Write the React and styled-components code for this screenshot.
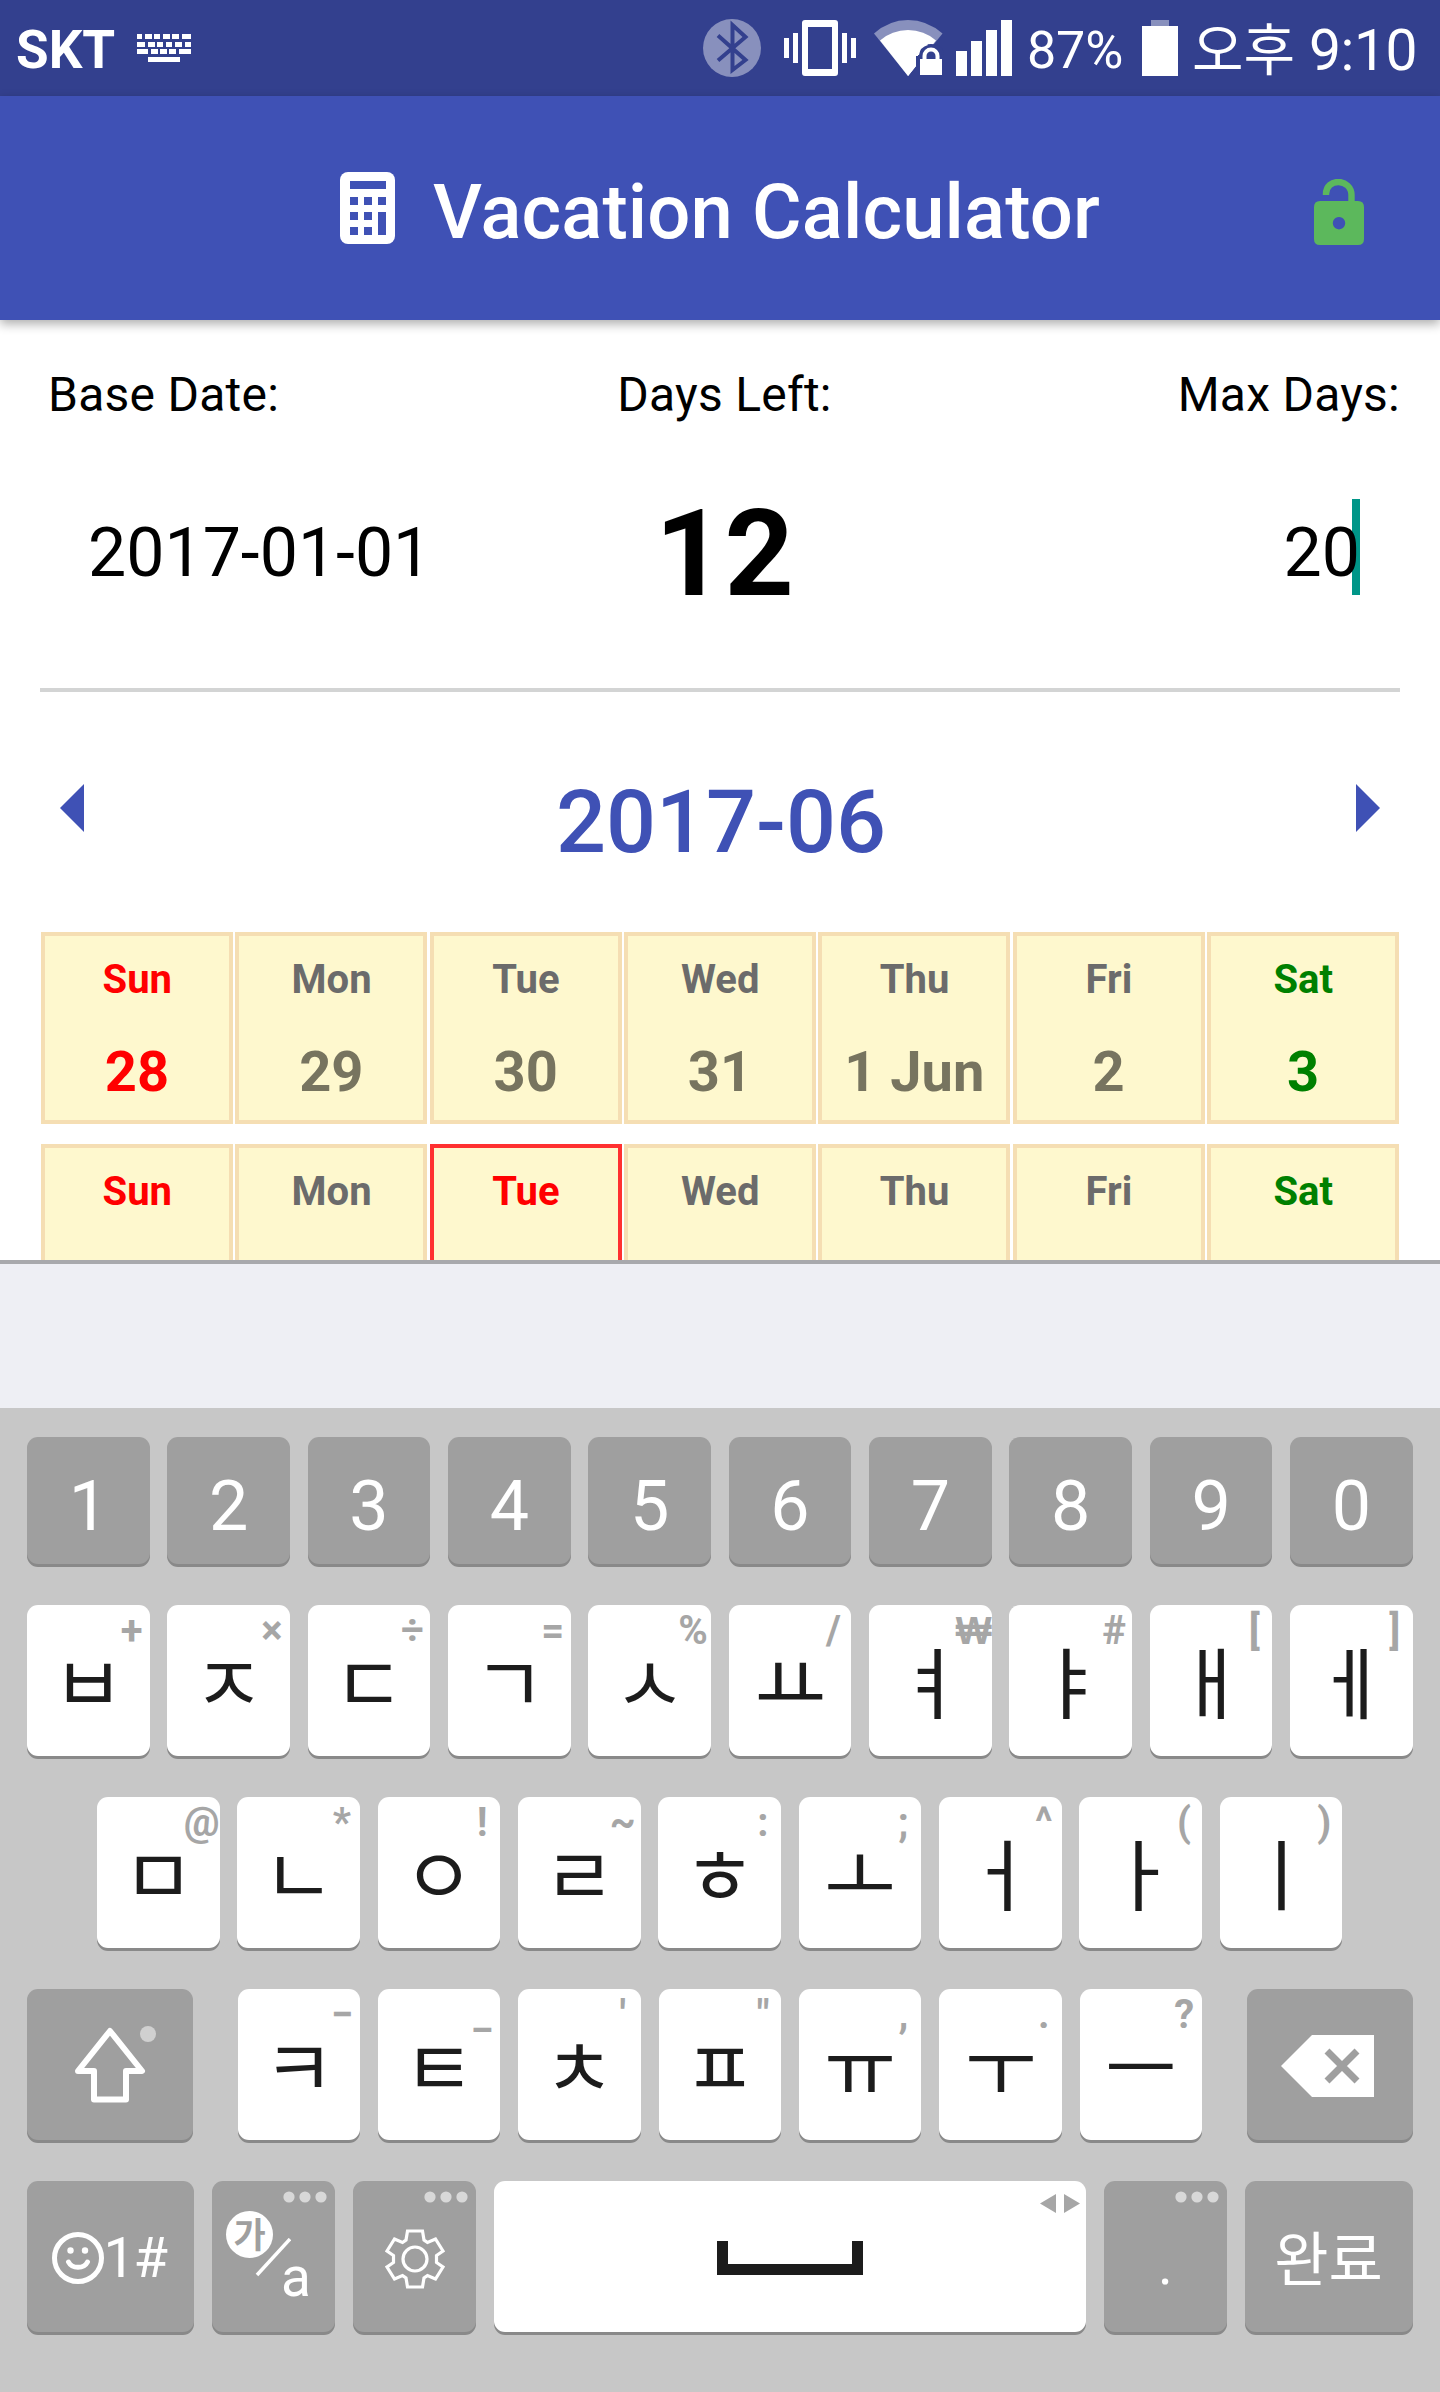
import React from 'react';
import styled, { createGlobalStyle } from 'styled-components';

const Global = createGlobalStyle`
  * { box-sizing: border-box; }
  body { margin: 0; background: #fff; }
  svg { display: block; flex: none; }
`;

const Screen = styled.div`
  width: 1440px;
  height: 2392px;
  overflow: hidden;
  display: flex;
  flex-direction: column;
  background: #fff;
  color: #000;
  font-family: Roboto, 'Noto Sans CJK KR', sans-serif;
  white-space: nowrap;
`;

/* status bar */
const StatusBar = styled.div`
  height: 96px;
  flex: none;
  display: flex;
  align-items: center;
  justify-content: space-between;
  padding: 0 23px 0 16px;
  background: #33408e;
  color: #fff;
`;
const StatusGroup = styled.div`
  display: flex;
  align-items: center;
`;
const Carrier = styled.span`
  width: 121px;
  font-size: 53px;
  font-weight: 700;
  line-height: 60px;
  padding-top: 3px;
`;
const Percent = styled.span`
  width: 113px;
  padding: 5px 0 0 14px;
  font-size: 52px;
  line-height: 60px;
  letter-spacing: -0.2px;
  margin-right: 16px;
`;
const Clock = styled.span`
  display: flex;
  align-items: center;
  margin-left: 14px;
  padding-top: 5px;
  font-size: 57px;
  line-height: 60px;
  letter-spacing: -0.5px;
`;
const Meridiem = styled.span`
  font-family: 'Noto Sans CJK KR', sans-serif;
  font-weight: 400;
  font-size: 56px;
  letter-spacing: 0;
  width: 117px;
  margin-top: -9px;
`;

/* app header */
const Header = styled.header`
  position: relative;
  z-index: 1;
  height: 224px;
  flex: none;
  display: grid;
  grid-template-columns: 1fr auto 1fr;
  align-items: center;
  background: #3f51b5;
  box-shadow: 0 4px 10px rgba(0, 0, 0, 0.32);
`;
const Brand = styled.div`
  grid-column: 2;
  display: flex;
  align-items: center;
  gap: 38px;
`;
const Title = styled.h1`
  margin: 8px 0 0;
  color: #fff;
  font-size: 76px;
  font-weight: 500;
  line-height: 90px;
  letter-spacing: 0.13px;
`;
const LockSlot = styled.div`
  justify-self: end;
  margin: 8px 76px 0 0;
`;

/* summary */
const Summary = styled.section`
  height: 372px;
  flex: none;
  margin: 0 40px;
  padding-top: 47px;
  border-bottom: 4px solid #d3d4d4;
  display: grid;
  grid-template-columns: repeat(3, 1fr);
  grid-template-rows: 56px 120px;
  row-gap: 70px;
`;
const Label = styled.div`
  font-size: 48px;
  line-height: 56px;
  letter-spacing: 0.25px;
  text-align: ${(p) => p.$align || 'left'};
  padding-left: ${(p) => p.$pad || 0}px;
`;
const Value = styled.div`
  display: flex;
  align-items: center;
  justify-content: ${(p) => p.$justify || 'flex-start'};
  font-size: ${(p) => (p.$big ? 121 : 68)}px;
  font-weight: ${(p) => (p.$big ? 700 : 400)};
  line-height: 120px;
  padding: ${(p) => p.$pad || '0'};
`;
const Caret = styled.span`
  width: 8px;
  height: 96px;
  margin: -13px 0 0 -8px;
  background: #009688;
`;
const Entered = styled.span`
  position: relative;
  z-index: 1;
`;

/* month */
const MonthBar = styled.div`
  height: 240px;
  flex: none;
  display: flex;
  align-items: center;
  justify-content: space-between;
  padding: 0 60px 8px;
`;
const Month = styled.h2`
  margin: 27px 0 0 2px;
  color: #3f51b5;
  font-size: 88px;
  font-weight: 500;
  line-height: 100px;
`;

/* calendar */
const Calendar = styled.div`
  height: 328px;
  flex: none;
  overflow: hidden;
  display: flex;
  flex-direction: column;
  gap: 20px;
  padding: 0 41px;
`;
const Week = styled.div`
  flex: none;
  display: grid;
  grid-template-columns: repeat(7, 192px);
  justify-content: space-between;
`;
const Cell = styled.div`
  height: 192px;
  border: 4px solid ${(p) => (p.$today ? '#ff3030' : '#f5deb3')};
  background: #fef8ce;
  text-align: center;
  font-weight: 700;
  color: ${(p) => p.$color};
`;
const DayName = styled.div`
  margin-top: 20px;
  padding-left: 0.5px;
  font-size: 40px;
  line-height: 48px;
`;
const DayNumber = styled.div`
  margin-top: 38px;
  font-size: 56px;
  line-height: 60px;
  color: ${(p) => p.$color};
`;

/* keyboard */
const Suggestions = styled.div`
  height: 148px;
  flex: none;
  border-top: 4px solid #a8a9ac;
  background: #eeeff4;
`;
const Keyboard = styled.div`
  height: 984px;
  flex: none;
  padding: 29px 27px 0;
  background: #c7c7c7;
  display: flex;
  flex-direction: column;
  gap: 38px;
`;
const KeyRow = styled.div`
  height: ${(p) => p.$height || 154}px;
  flex: none;
  display: grid;
  grid-template-columns: ${(p) => p.$cols};
  justify-content: space-between;
  padding: 0 ${(p) => p.$inset || 0}px;
`;
const LetterRow = styled(KeyRow)`
  grid-template-columns: repeat(${(p) => p.$count}, 122.6px);
  justify-content: start;
  column-gap: 17.75px;
`;
const Key = styled.div`
  position: relative;
  margin-bottom: 3px;
  border-radius: 11px;
  display: flex;
  align-items: center;
  justify-content: center;
  background: ${(p) => (p.$dark ? '#9f9f9f' : '#fff')};
  color: ${(p) => (p.$dark ? '#fff' : '#1c1c1c')};
  box-shadow: 0 3px 0 #898989;
  font-size: 70px;
  line-height: 1;
`;
const Digit = styled.span`
  margin-top: 11px;
`;
const Jamo = styled.span`
  font-family: 'Noto Sans CJK KR', sans-serif;
  font-size: 78px;
  line-height: 100px;
  margin-top: -4px;
`;
const Hint = styled.span`
  position: absolute;
  top: 2px;
  right: -2px;
  width: 40px;
  display: flex;
  justify-content: center;
  font-family: ${(p) => (p.$won ? "'Liberation Sans'" : 'Roboto')}, sans-serif;
  font-size: ${(p) => (p.$won ? 38 : 40)}px;
  font-weight: 700;
  line-height: 48px;
  color: #a6a6a6;
`;
const Corner = styled.span`
  position: absolute;
  top: ${(p) => p.$top}px;
  right: ${(p) => p.$right}px;
`;
const IconNudge = styled.span`
  padding: ${(p) => p.$pad};
`;
const Symbols = styled.span`
  font-size: 56px;
  letter-spacing: -1.5px;
  margin: 3px 3px 0 0;
`;
const LangKey = styled.span`
  position: relative;
  width: 123px;
  height: 151px;
`;
const Ga = styled.span`
  position: absolute;
  left: 14px;
  top: 30px;
  width: 47px;
  height: 47px;
  border-radius: 50%;
  background: #fff;
  color: #9f9f9f;
  text-align: center;
  font: 700 35px/43px 'Noto Sans CJK KR', sans-serif;
`;
const LatinA = styled.span`
  position: absolute;
  left: 69px;
  top: 66px;
  font-size: 55px;
  line-height: 60px;
`;
const Slash = styled.svg`
  position: absolute;
  left: 43px;
  top: 57px;
`;
const Dot = styled.span`
  margin-top: 16px;
  font-size: 56px;
`;
const Done = styled.span`
  font: 400 59px/70px 'Noto Sans CJK KR', sans-serif;
  margin: -2px 1px 0 0;
`;

const KeyboardIcon = () => {
  const rows = [
    [0, [[0, 5], [8, 7], [17, 6], [26, 7], [35, 7], [45, 9]]],
    [8, [[0, 8], [11, 7], [20, 6], [29, 6], [38, 7], [48, 6]]],
    [15, [[0, 11], [14, 7], [23, 7], [32, 7], [42, 12]]],
    [23, [[11, 32]]],
  ];
  return (
    <svg width="54" height="28" viewBox="0 0 54 28" fill="#fff">
      {rows.map(([y, keys]) => keys.map(([x, w]) => <rect key={`${x}-${y}`} x={x} y={y} width={w} height="5" />))}
    </svg>
  );
};

const StatusIcons = () => (
  <svg width="312" height="96" viewBox="701 0 312 96" fill="#fff">
    <circle cx="732" cy="48" r="29" fill="#8890bd" />
    <path d="M718 35.5 L745.5 60 L732.5 70 V25 L745.5 37 L718 60.5" fill="none" stroke="#33408e" strokeWidth="4" />
    <path fillRule="evenodd" d="M805 20h30q3 0 3 3v50q0 3-3 3h-30q-3 0-3-3V23q0-3 3-3zM808 27v42h24V27z" />
    <path d="M784 38h5v20h-5zM793 33h5v30h-5zM842 33h5v30h-5zM851 38h5v20h-5z" />
    <path d="M874 33.500Q889 20 908 20T942.500 33.500L908 76z" fill="#8890bd" />
    <path d="M880 40.500Q892 30 908 30T936 40.500L908 76z" />
    <path d="M916 76V56h2q0-12 13-12t13 12v22h-28z" fill="#33408e" />
    <path d="M908 76l8-10V55h3q1-8 9-10l-8-10-12 10z" />
    <path d="M920 59h22v16h-22z" />
    <path d="M924.500 60v-4a6.500 6.500 0 0 1 13 0v4" fill="none" stroke="#fff" strokeWidth="4" />
    <path d="M956 51h11v25h-11zM971 41h11v35h-11zM986 30h11v46h-11zM1001 20h11v56h-11z" />
  </svg>
);

const BatteryIcon = () => (
  <svg width="36" height="56" viewBox="0 0 36 56">
    <rect x="9" width="18" height="6" fill="#8890bd" />
    <rect y="6" width="36" height="50" fill="#fff" />
  </svg>
);

const CalculatorIcon = () => (
  <svg width="55" height="72" viewBox="0 0 55 72">
    <rect width="55" height="72" rx="8" fill="#fff" />
    <path
      fill="#3f51b5"
      d="M10 9h36v8H10zM10 25h8v8h-8zM24 25h8v8h-8zM38 25h8v8h-8zM10 40h8v8h-8zM24 40h8v8h-8zM10 55h8v8h-8zM24 55h8v8h-8zM38 40h8v23h-8z"
    />
  </svg>
);

const UnlockIcon = () => (
  <svg width="50" height="66" viewBox="0 0 50 66">
    <path d="M12 16v-1C12 7 18 3 24.500 3S37.500 8 37.500 16v8" fill="none" stroke="#5cb85c" strokeWidth="6.400" />
    <path
      fillRule="evenodd"
      fill="#5cb85c"
      d="M6 22h38q6 0 6 6v32q0 6-6 6H6q-6 0-6-6V28q0-6 6-6zM25 38a6.200 6.200 0 1 0 .01 0z"
    />
  </svg>
);

const Arrow = ({ flip }) => (
  <svg width="24" height="48" viewBox="0 0 24 48" fill="#3f51b5">
    <path d={flip ? 'M0 0L24 24L0 48z' : 'M24 0L0 24L24 48z'} />
  </svg>
);

const ShiftIcon = () => (
  <svg width="72" height="78" viewBox="0 0 72 78">
    <path
      d="M36 5L68 45H52V73.500H20V45H4z"
      fill="none"
      stroke="#fff"
      strokeWidth="6"
      strokeLinejoin="round"
    />
  </svg>
);

const BackspaceIcon = () => (
  <svg width="93" height="62" viewBox="0 0 93 62">
    <path d="M0 31L31 0H93V62H31z" fill="#fff" />
    <path d="M46 16L76 46M76 16L46 46" stroke="#9f9f9f" strokeWidth="7" />
  </svg>
);

const SmileIcon = () => (
  <svg width="52" height="52" viewBox="0 0 52 52" fill="none" stroke="#fff">
    <circle cx="26" cy="26" r="23.500" strokeWidth="5" />
    <path d="M16.500 30C20 37 32 37 35.500 30" strokeWidth="5" strokeLinecap="round" />
    <circle cx="18.500" cy="18.500" r="3.200" fill="#fff" stroke="none" />
    <circle cx="33" cy="18.500" r="3.200" fill="#fff" stroke="none" />
  </svg>
);

const GearIcon = () => (
  <svg width="62" height="62" viewBox="-31 -31 62 62" fill="none" stroke="#fff" strokeWidth="3.200">
    <path d="M-7.500-28H7.500L9-19L12.500-16.500L20.500-20L28-8L21.500-3.500V3.500L28 8L20.500 20L12.500 16.500L9 19L7.500 28H-7.500L-9 19L-12.500 16.500L-20.500 20L-28 8L-21.500 3.500V-3.500L-28-8L-20.500-20L-12.500-16.500L-9-19z" />
    <circle r="12" />
  </svg>
);

const MoreDots = () => (
  <svg width="44" height="12" viewBox="0 0 44 12" fill="#d8d8d8">
    <circle cx="6" cy="6" r="5.600" />
    <circle cx="22" cy="6" r="5.600" />
    <circle cx="38" cy="6" r="5.600" />
  </svg>
);

const SpaceIcon = () => (
  <svg width="146" height="34" viewBox="0 0 146 34">
    <path d="M0 0H11V23H135V0H146V34H0z" fill="#1c1c1c" />
  </svg>
);

const GRAY = '#6b6b6b';
const days = ['Sun', 'Mon', 'Tue', 'Wed', 'Thu', 'Fri', 'Sat'];
const weeks = [
  { dates: ['28', '29', '30', '31', '1 Jun', '2', '3'] },
  { dates: ['4', '5', '6', '7', '8', '9', '10'], today: 2 },
];
const dayColor = (i, today) => (i === 0 || i === today ? '#ff0000' : i === 6 ? '#008000' : GRAY);

const digits = ['1', '2', '3', '4', '5', '6', '7', '8', '9', '0'];
const topRow = [['ㅂ', '+'], ['ㅈ', '×'], ['ㄷ', '÷'], ['ㄱ', '='], ['ㅅ', '%'], ['ㅛ', '/'], ['ㅕ', '₩'], ['ㅑ', '#'], ['ㅐ', '['], ['ㅔ', ']']];
const homeRow = [['ㅁ', '@'], ['ㄴ', '*'], ['ㅇ', '!'], ['ㄹ', '~'], ['ㅎ', ':'], ['ㅗ', ';'], ['ㅓ', '^'], ['ㅏ', '('], ['ㅣ', ')']];
const lowRow = [['ㅋ', '−'], ['ㅌ', '_'], ['ㅊ', "'"], ['ㅍ', '"'], ['ㅠ', ','], ['ㅜ', '.'], ['ㅡ', '?']];

const LetterKey = ({ jamo, hint }) => (
  <Key>
    <Jamo>{jamo}</Jamo>
    <Hint $won={hint === '₩'}>{hint}</Hint>
  </Key>
);
const letters = (row) => row.map(([jamo, hint]) => <LetterKey key={jamo} jamo={jamo} hint={hint} />);

export default function App() {
  return (
    <Screen>
      <Global />
      <StatusBar>
        <StatusGroup>
          <Carrier>SKT</Carrier>
          <KeyboardIcon />
        </StatusGroup>
        <StatusGroup>
          <StatusIcons />
          <Percent>87%</Percent>
          <BatteryIcon />
          <Clock>
            <Meridiem>오후</Meridiem>
            9:10
          </Clock>
        </StatusGroup>
      </StatusBar>

      <Header>
        <Brand>
          <CalculatorIcon />
          <Title>Vacation Calculator</Title>
        </Brand>
        <LockSlot>
          <UnlockIcon />
        </LockSlot>
      </Header>

      <Summary>
        <Label $pad={8}>Base Date:</Label>
        <Label $align="center" $pad={9}>Days Left:</Label>
        <Label $align="right">Max Days:</Label>
        <Value $pad="0 0 0 48px">2017-01-01</Value>
        <Value $big $justify="center" $pad="1px 0 0 9px">12</Value>
        <Value $justify="flex-end" $pad="0 40px 0 0">
          <Entered>20</Entered>
          <Caret />
        </Value>
      </Summary>

      <MonthBar>
        <Arrow />
        <Month>2017-06</Month>
        <Arrow flip />
      </MonthBar>

      <Calendar>
        {weeks.map((week, w) => (
          <Week key={w}>
            {week.dates.map((date, i) => {
              const color = dayColor(i, week.today);
              return (
                <Cell key={date} $color={color} $today={i === week.today}>
                  <DayName>{days[i]}</DayName>
                  {w === 0 && <DayNumber $color={color === GRAY ? '#77745f' : color}>{date}</DayNumber>}
                </Cell>
              );
            })}
          </Week>
        ))}
      </Calendar>

      <Suggestions />
      <Keyboard>
        <LetterRow $height={130} $count={10}>
          {digits.map((d) => (
            <Key key={d} $dark>
              <Digit>{d}</Digit>
            </Key>
          ))}
        </LetterRow>
        <LetterRow $count={10}>{letters(topRow)}</LetterRow>
        <LetterRow $count={9} $inset={70}>{letters(homeRow)}</LetterRow>
        <KeyRow $cols="166px 965px 166px">
          <Key $dark>
            <ShiftIcon />
            <Corner $top={37} $right={37}>
              <svg width="16" height="16" viewBox="0 0 16 16">
                <circle cx="8" cy="8" r="8" fill="#d0d0d0" />
              </svg>
            </Corner>
          </Key>
          <LetterRow $count={7}>{letters(lowRow)}</LetterRow>
          <Key $dark>
            <IconNudge $pad="3px 5px 0 0">
              <BackspaceIcon />
            </IconNudge>
          </Key>
        </KeyRow>
        <KeyRow $cols="167px 123px 123px 592px 123px 168px">
          <Key $dark>
            <IconNudge $pad="3px 0 0">
              <SmileIcon />
            </IconNudge>
            <Symbols>1#</Symbols>
          </Key>
          <Key $dark>
            <LangKey>
              <Ga>가</Ga>
              <Slash width="36" height="40" viewBox="0 0 36 40">
                <path d="M35 1L2 37" stroke="#fff" strokeWidth="3.500" />
              </Slash>
              <LatinA>a</LatinA>
            </LangKey>
            <Corner $top={10} $right={8}>
              <MoreDots />
            </Corner>
          </Key>
          <Key $dark>
            <IconNudge $pad="4px 0 0">
              <GearIcon />
            </IconNudge>
            <Corner $top={10} $right={8}>
              <MoreDots />
            </Corner>
          </Key>
          <Key>
            <IconNudge $pad="3px 0 0">
              <SpaceIcon />
            </IconNudge>
            <Corner $top={13} $right={6}>
              <svg width="40" height="19" viewBox="0 0 40 19" fill="#a6a6a6">
                <path d="M16 0V19L0 9.500zM24 0V19L40 9.500z" />
              </svg>
            </Corner>
          </Key>
          <Key $dark>
            <Dot>.</Dot>
            <Corner $top={10} $right={8}>
              <MoreDots />
            </Corner>
          </Key>
          <Key $dark>
            <Done>완료</Done>
          </Key>
        </KeyRow>
      </Keyboard>
    </Screen>
  );
}
